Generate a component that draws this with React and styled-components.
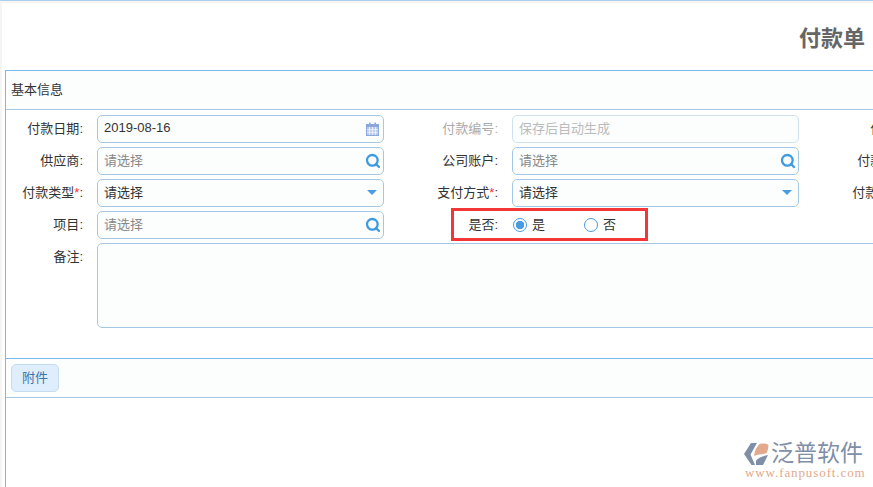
import React from 'react'
import styled, { createGlobalStyle } from 'styled-components'
import { Search } from 'lucide-react'

const GlobalStyle = createGlobalStyle`
  html, body {
    margin: 0;
    padding: 0;
    height: 100%;
    overflow: hidden;
    background: #fff;
  }
  body {
    font-family: "Liberation Sans", "Noto Sans CJK SC", sans-serif;
    font-size: 13px;
    color: #333;
  }
`

const CalendarIcon = () => (
  <svg width="13" height="14" viewBox="0 0 13 14">
    <rect x="0.5" y="2.5" width="12" height="11" fill="#b9c8ea" stroke="#8ba8dc" />
    <rect x="0" y="2" width="13" height="3" fill="#8ba8dc" />
    <rect x="3" y="0.5" width="1.6" height="3" fill="#8ba8dc" />
    <rect x="8.4" y="0.5" width="1.6" height="3" fill="#8ba8dc" />
    <path d="M3.5 5v8M6.5 5v8M9.5 5v8M1 7.7h11M1 10.4h11" stroke="#f2f5fc" strokeWidth="0.8" />
  </svg>
)

const fields = [
  [
    { label: '付款日期', value: '2019-08-16', icon: 'date' },
    { label: '付款编号', placeholder: '保存后自动生成', disabled: true },
    { label: '付款人', placeholder: '请选择', icon: 'search' },
  ],
  [
    { label: '供应商', placeholder: '请选择', icon: 'search' },
    { label: '公司账户', placeholder: '请选择', icon: 'search' },
    { label: '付款账户', placeholder: '请选择', icon: 'search' },
  ],
  [
    { label: '付款类型', required: true, value: '请选择', icon: 'select' },
    { label: '支付方式', required: true, value: '请选择', icon: 'select' },
    { label: '付款金额', required: true, value: '0.00' },
  ],
]

const FieldIcon = ({ type }) => {
  if (type === 'date') return <IconSlot><CalendarIcon /></IconSlot>
  if (type === 'search') {
    return (
      <IconSlot>
        <Search size={16} color="#3f9ae0" strokeWidth={3.4} />
      </IconSlot>
    )
  }
  if (type === 'select') return <IconSlot><Caret /></IconSlot>
  return null
}

const FormField = ({ label, required, value, placeholder, disabled, icon }) => (
  <Field>
    <Label $disabled={disabled}>
      {label}
      {required && <Star>*</Star>}:
    </Label>
    <InputBox $disabled={disabled}>
      {value ? <Value>{value}</Value> : <Placeholder $disabled={disabled}>{placeholder}</Placeholder>}
      <FieldIcon type={icon} />
    </InputBox>
  </Field>
)

const Logo = () => (
  <LogoWrap>
    <LogoTop>
      <svg width="27" height="24" viewBox="0 0 27 24">
        <path d="M8 1h6L7.5 12.5 12 23H8.5L1 12z" fill="#7f8fa8" />
        <path d="M11 14c.5-5 2.5-9 5.5-12 3-.8 6.500-.5 9 1-.3 4-1 6.500-2 8-3 1.500-8 1-12.500 3z" fill="#e3a98c" />
        <path d="M13 23v-4.500c3-3 7.500-4.500 12-5.500l-5 10z" fill="#7f8fa8" />
      </svg>
      <LogoName>泛普软件</LogoName>
    </LogoTop>
    <LogoUrl>www.fanpusoft.com</LogoUrl>
  </LogoWrap>
)

const App = () => (
  <Page>
    <GlobalStyle />
    <Sheet>
      <Title>付款单</Title>
      <Panel>
        <PanelHeader>基本信息</PanelHeader>
        <FormBody>
          {fields.map((row) => (
            <FieldRow key={row[0].label}>
              {row.map((field) => (
                <FormField key={field.label} {...field} />
              ))}
            </FieldRow>
          ))}
          <FieldRow>
            <FormField label="项目" placeholder="请选择" icon="search" />
            <Field>
              <Label>是否:</Label>
              <RadioGroup>
                <RadioItem>
                  <RadioDot $checked />
                  <span>是</span>
                </RadioItem>
                <RadioItem>
                  <RadioDot />
                  <span>否</span>
                </RadioItem>
              </RadioGroup>
              <Highlight />
            </Field>
          </FieldRow>
          <NoteField>
            <Label>备注:</Label>
            <NoteBox />
          </NoteField>
        </FormBody>
        <AttachBar>
          <AttachButton>附件</AttachButton>
        </AttachBar>
        <PanelRest />
      </Panel>
    </Sheet>
    <Logo />
  </Page>
)

export default App

const Page = styled.div`
  position: relative;
  width: 873px;
  height: 487px;
  overflow: hidden;
  box-sizing: border-box;
  border-top: 1px solid #a9d0ec;
  padding: 2px 0 0 2px;
  background: #f5f5f5;
`

const Sheet = styled.div`
  width: 1662px;
  height: 100%;
  background: #fff;
  display: flex;
  flex-direction: column;
  padding-left: 3px;
  box-sizing: border-box;
`

const Title = styled.h1`
  margin: 0;
  height: 67px;
  flex: none;
  display: flex;
  align-items: center;
  justify-content: center;
  padding: 0 5px 2px 0;
  box-sizing: border-box;
  font-size: 22px;
  font-weight: 700;
  color: #666;
`

const Panel = styled.section`
  flex: 1;
  display: flex;
  flex-direction: column;
  border-top: 1px solid #7ab8e8;
  border-left: 1px solid #7ab8e8;
`

const PanelHeader = styled.div`
  height: 38px;
  flex: none;
  box-sizing: content-box;
  display: flex;
  align-items: center;
  padding-left: 5px;
  background: #fcfefe;
  border-bottom: 1px solid #a4c8e4;
  color: #333;
  line-height: 34px;
`

const FormBody = styled.div`
  height: 248px;
  flex: none;
  box-sizing: border-box;
  padding-top: 5px;
  display: flex;
  flex-direction: column;
  gap: 4px;
  background: #fff;
`

const FieldRow = styled.div`
  display: flex;
`

const Field = styled.div`
  position: relative;
  flex: none;
  width: 415px;
  height: 28px;
  display: flex;
  align-items: center;
  gap: 14px;
`

const Label = styled.label`
  flex: none;
  width: 77px;
  margin-top: -4px;
  text-align: right;
  white-space: nowrap;
  color: ${(p) => (p.$disabled ? '#aaa' : '#333')};
`

const Star = styled.span`
  color: #f33;
`

const InputBox = styled.div`
  flex: none;
  width: 287px;
  height: 28px;
  box-sizing: border-box;
  display: flex;
  align-items: center;
  justify-content: space-between;
  padding: 0 1px 0 6px;
  border: 1px solid ${(p) => (p.$disabled ? '#cfe0ef' : '#a4c8e4')};
  border-radius: 5px;
  background: #fcfefe;
`

const Value = styled.span`
  color: #333;
  margin-top: -4px;
`

const Placeholder = styled.span`
  color: ${(p) => (p.$disabled ? '#bbb' : '#888')};
  margin-top: -4px;
`

const IconSlot = styled.span`
  width: 19px;
  display: flex;
  align-items: center;
  justify-content: center;
`

const Caret = styled.i`
  display: block;
  margin: -1px 2px 0 0;
  border-style: solid;
  border-width: 5px 5.5px 0;
  border-color: #4a9be0 transparent transparent;
`

const RadioGroup = styled.div`
  display: flex;
  align-items: center;
  gap: 39px;
  margin-left: 1px;
`

const RadioItem = styled.span`
  display: flex;
  align-items: center;
  gap: 5px;
  color: #333;

  span {
    margin-top: -3px;
  }
`

const RadioDot = styled.i`
  width: 14px;
  height: 14px;
  box-sizing: border-box;
  border-radius: 50%;
  border: 1.5px solid #4a9be0;
  background: ${(p) => (p.$checked ? 'radial-gradient(circle, #4a9be0 0 4px, #fff 4.5px)' : '#fff')};
`

const Highlight = styled.div`
  position: absolute;
  left: 30px;
  top: -3px;
  width: 197px;
  height: 33px;
  box-sizing: border-box;
  border: 3px solid #f33737;
  pointer-events: none;
`

const NoteField = styled.div`
  display: flex;
  gap: 14px;
  height: 85px;

  ${Label} {
    margin-top: 0;
    padding-top: 3px;
  }
`

const NoteBox = styled.div`
  flex: none;
  width: 1240px;
  height: 85px;
  box-sizing: border-box;
  border: 1px solid #a4c8e4;
  border-radius: 5px;
  background: #fcfefe;
`

const AttachBar = styled.div`
  height: 38px;
  flex: none;
  box-sizing: content-box;
  display: flex;
  align-items: center;
  padding-left: 5px;
  background: #fcfefe;
  border-top: 1px solid #7ab8e8;
  border-bottom: 1px solid #a4c8e4;
`

const AttachButton = styled.button`
  width: 48px;
  height: 28px;
  padding: 0 0 4px;
  border: 1px solid #c5dcf0;
  border-radius: 5px;
  background: #deeefc;
  color: #3f74a8;
  font: inherit;
`

const PanelRest = styled.div`
  flex: 1;
  background: #fff;
`

const LogoWrap = styled.div`
  position: absolute;
  left: 743px;
  top: 440px;
  width: 124px;
  display: flex;
  flex-direction: column;
  background: #fff;
`

const LogoTop = styled.div`
  display: flex;
  align-items: center;
  gap: 1px;
  height: 26px;
`

const LogoName = styled.span`
  font-size: 23px;
  font-weight: 400;
  line-height: 26px;
  margin-top: -2px;
  color: #7f8fa8;
  white-space: nowrap;
`

const LogoUrl = styled.span`
  font-family: "Liberation Serif", serif;
  font-size: 13px;
  line-height: 13px;
  font-weight: 400;
  letter-spacing: 0.9px;
  color: #e3a98c;
  white-space: nowrap;
  margin: -1px 0 0 2px;
`
